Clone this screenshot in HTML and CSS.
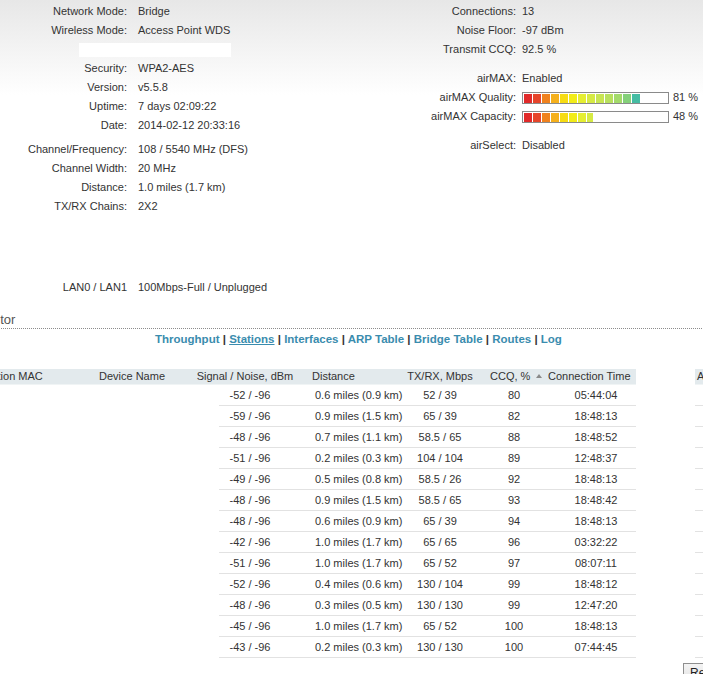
FILE: index.html
```html
<!DOCTYPE html>
<html>
<head>
<meta charset="utf-8">
<link rel="stylesheet" href="styles.css">
</head>
<body>
<div class="top">
  <div class="info info-left">
    <div class="lbl">Network Mode:</div><div class="val">Bridge</div>
    <div class="lbl">Wireless Mode:</div><div class="val">Access Point WDS</div>
    <div class="masked-row"><div class="mask"></div></div>
    <div class="lbl">Security:</div><div class="val">WPA2-AES</div>
    <div class="lbl">Version:</div><div class="val">v5.5.8</div>
    <div class="lbl">Uptime:</div><div class="val">7 days 02:09:22</div>
    <div class="lbl">Date:</div><div class="val">2014-02-12 20:33:16</div>
    <div class="spacer s4"></div>
    <div class="lbl">Channel/Frequency:</div><div class="val">108 / 5540 MHz (DFS)</div>
    <div class="lbl">Channel Width:</div><div class="val">20 MHz</div>
    <div class="lbl">Distance:</div><div class="val">1.0 miles (1.7 km)</div>
    <div class="lbl">TX/RX Chains:</div><div class="val">2X2</div>
  </div>
  <div class="info info-right">
    <div class="lbl">Connections:</div><div class="val">13</div>
    <div class="lbl">Noise Floor:</div><div class="val">-97 dBm</div>
    <div class="lbl">Transmit CCQ:</div><div class="val">92.5 %</div>
    <div class="spacer s10"></div>
    <div class="lbl">airMAX:</div><div class="val">Enabled</div>
    <div class="lbl">airMAX Quality:</div>
    <div class="val barval"><div class="bar"><div class="fill" style="width:81%"></div></div><span class="pct">81 %</span></div>
    <div class="lbl">airMAX Capacity:</div>
    <div class="val barval"><div class="bar"><div class="fill" style="width:48%"></div></div><span class="pct">48 %</span></div>
    <div class="spacer s10"></div>
    <div class="lbl">airSelect:</div><div class="val">Disabled</div>
  </div>
</div>

<div class="info lan">
  <div class="lbl">LAN0 / LAN1</div><div class="val">100Mbps-Full / Unplugged</div>
</div>

<div class="lower">
  <div class="heading">Monitor</div>
  <div class="tabs">
    <a class="tab">Throughput</a> <span class="sep">|</span>
    <a class="tab active">Stations</a> <span class="sep">|</span>
    <a class="tab">Interfaces</a> <span class="sep">|</span>
    <a class="tab">ARP Table</a> <span class="sep">|</span>
    <a class="tab">Bridge Table</a> <span class="sep">|</span>
    <a class="tab">Routes</a> <span class="sep">|</span>
    <a class="tab">Log</a>
  </div>

  <table class="stations">
    <colgroup>
      <col class="w-mac"><col class="w-name"><col class="w-sig"><col class="w-dist"><col class="w-txrx"><col class="w-ccq"><col class="w-time"><col class="w-gap"><col class="w-act">
    </colgroup>
    <thead>
      <tr>
        <th class="h-mac">Station MAC</th>
        <th class="h-name">Device Name</th>
        <th class="h-sig">Signal / Noise, dBm</th>
        <th class="h-dist">Distance</th>
        <th class="h-txrx">TX/RX, Mbps</th>
        <th class="h-ccq">CCQ, %<span class="sort"></span></th>
        <th class="h-time">Connection Time</th>
        <th class="h-gap"></th>
        <th class="h-act">Action</th>
      </tr>
    </thead>
    <tbody>
      <tr><td></td><td></td><td class="sig">-52 / -96</td><td class="dist">0.6 miles (0.9 km)</td><td class="txrx">52 / 39</td><td class="ccq">80</td><td class="time">05:44:04</td><td class="gap"></td><td class="act"></td></tr>
      <tr><td></td><td></td><td class="sig">-59 / -96</td><td class="dist">0.9 miles (1.5 km)</td><td class="txrx">65 / 39</td><td class="ccq">82</td><td class="time">18:48:13</td><td class="gap"></td><td class="act"></td></tr>
      <tr><td></td><td></td><td class="sig">-48 / -96</td><td class="dist">0.7 miles (1.1 km)</td><td class="txrx">58.5 / 65</td><td class="ccq">88</td><td class="time">18:48:52</td><td class="gap"></td><td class="act"></td></tr>
      <tr><td></td><td></td><td class="sig">-51 / -96</td><td class="dist">0.2 miles (0.3 km)</td><td class="txrx">104 / 104</td><td class="ccq">89</td><td class="time">12:48:37</td><td class="gap"></td><td class="act"></td></tr>
      <tr><td></td><td></td><td class="sig">-49 / -96</td><td class="dist">0.5 miles (0.8 km)</td><td class="txrx">58.5 / 26</td><td class="ccq">92</td><td class="time">18:48:13</td><td class="gap"></td><td class="act"></td></tr>
      <tr><td></td><td></td><td class="sig">-48 / -96</td><td class="dist">0.9 miles (1.5 km)</td><td class="txrx">58.5 / 65</td><td class="ccq">93</td><td class="time">18:48:42</td><td class="gap"></td><td class="act"></td></tr>
      <tr><td></td><td></td><td class="sig">-48 / -96</td><td class="dist">0.6 miles (0.9 km)</td><td class="txrx">65 / 39</td><td class="ccq">94</td><td class="time">18:48:13</td><td class="gap"></td><td class="act"></td></tr>
      <tr><td></td><td></td><td class="sig">-42 / -96</td><td class="dist">1.0 miles (1.7 km)</td><td class="txrx">65 / 65</td><td class="ccq">96</td><td class="time">03:32:22</td><td class="gap"></td><td class="act"></td></tr>
      <tr><td></td><td></td><td class="sig">-51 / -96</td><td class="dist">1.0 miles (1.7 km)</td><td class="txrx">65 / 52</td><td class="ccq">97</td><td class="time">08:07:11</td><td class="gap"></td><td class="act"></td></tr>
      <tr><td></td><td></td><td class="sig">-52 / -96</td><td class="dist">0.4 miles (0.6 km)</td><td class="txrx">130 / 104</td><td class="ccq">99</td><td class="time">18:48:12</td><td class="gap"></td><td class="act"></td></tr>
      <tr><td></td><td></td><td class="sig">-48 / -96</td><td class="dist">0.3 miles (0.5 km)</td><td class="txrx">130 / 130</td><td class="ccq">99</td><td class="time">12:47:20</td><td class="gap"></td><td class="act"></td></tr>
      <tr><td></td><td></td><td class="sig">-45 / -96</td><td class="dist">1.0 miles (1.7 km)</td><td class="txrx">65 / 52</td><td class="ccq">100</td><td class="time">18:48:13</td><td class="gap"></td><td class="act"></td></tr>
      <tr><td></td><td></td><td class="sig">-43 / -96</td><td class="dist">0.2 miles (0.3 km)</td><td class="txrx">130 / 130</td><td class="ccq">100</td><td class="time">07:44:45</td><td class="gap"></td><td class="act"></td></tr>
    </tbody>
  </table>

  <div class="actions">
    <button class="btn">Refresh</button>
  </div>
</div>
</body>
</html>
```

FILE: styles.css
```css
html, body {
  margin: 0;
  padding: 0;
  overflow: hidden;
}
body {
  width: 703px;
  height: 674px;
  font-family: "Liberation Sans", Arial, sans-serif;
  font-size: 11px;
  color: #333;
  background: #fff linear-gradient(#e7e7e7, #ffffff) no-repeat;
  background-size: 100% 95px;
}

.top {
  display: flex;
  padding-top: 2px;
}
.info {
  display: grid;
  line-height: 19px;
  align-content: start;
}
.info-left {
  width: 390px;
  grid-template-columns: 127px 1fr;
  column-gap: 11px;
}
.info-right {
  grid-template-columns: 126px 1fr;
  column-gap: 6px;
}
.lbl {
  text-align: right;
  white-space: nowrap;
}
.val {
  white-space: nowrap;
}
.spacer {
  grid-column: 1 / -1;
}
.s4 { height: 5px; }
.s10 { height: 10px; }

.masked-row {
  grid-column: 1 / -1;
  height: 19px;
  padding-left: 79px;
  box-sizing: border-box;
  padding-top: 3px;
}
.mask {
  width: 152px;
  height: 14px;
  background: #fff;
}

.barval {
  display: flex;
  align-items: center;
  gap: 4px;
}
.bar {
  width: 144px;
  height: 9px;
  border: 1px solid #8a8a8a;
  background: #fff;
  padding: 1px 0 0 1px;
  box-sizing: content-box;
}
.fill {
  height: 9px;
  max-width: 143px;
  background:
    repeating-linear-gradient(90deg, transparent 0 8px, #fff 8px 9px),
    linear-gradient(90deg,
      #e12a2a 0 9px, #e6452a 9px 18px, #f0821e 18px 27px, #f5b01c 27px 36px,
      #f7dc12 36px 45px, #f2ec18 45px 54px, #e5ee32 54px 63px, #d6ea44 63px 72px,
      #c8e552 72px 81px, #b8e05e 81px 90px, #a3da6a 90px 99px, #84d07a 99px 108px,
      #45bca3 108px 117px, #36b0b5 117px 126px, #2ea5c4 126px 135px, #2a9ad0 135px 144px);
  background-size: 144px 9px, 144px 9px;
  background-repeat: no-repeat;
}
.pct {
  line-height: 19px;
}

.lan {
  margin-top: 62px;
  grid-template-columns: 127px 1fr;
  column-gap: 11px;
}

.lower {
  margin-left: -30px;
  width: 800px;
}
.heading {
  margin-top: 15px;
  font-size: 13px;
  line-height: 16px;
  color: #555;
  padding-left: 2px;
  border-bottom: 1px dotted #8c8c8c;
}
.tabs {
  margin-top: 2px;
  line-height: 16px;
  font-weight: bold;
  font-size: 11.5px;
  padding-left: 185px;
  white-space: nowrap;
}
.tab {
  color: #3a8cae;
  text-decoration: none;
}
.tab.active {
  text-decoration: underline;
}
.sep {
  color: #333;
}

.stations {
  margin-top: 22px;
  border-collapse: separate;
  border-spacing: 0;
  table-layout: fixed;
  width: 800px;
}
.w-mac { width: 120px; }
.w-name { width: 100px; }
.w-sig { width: 110px; }
.w-dist { width: 100px; }
.w-txrx { width: 80px; }
.w-ccq { width: 68px; }
.w-time { width: 88px; }
.w-gap { width: 59px; }
.w-act { width: 75px; }

.stations th {
  font-weight: normal;
  height: 15px;
  line-height: 15px;
  padding: 0;
  background: #e3eaed;
  border-bottom: 1px solid #f0f4f5;
  text-align: left;
  white-space: nowrap;
  overflow: hidden;
}
.stations th.h-gap {
  background: transparent;
  border-bottom-color: transparent;
}
.stations th.h-mac { padding-left: 11px; }
.stations th.h-name { padding-left: 9px; }
.stations th.h-sig { text-align: center; }
.stations th.h-dist { padding-left: 12px; }
.stations th.h-txrx { text-align: center; }
.stations th.h-ccq { padding-left: 10px; }
.stations th.h-time { padding-left: 0; }
.stations th.h-act { padding-left: 2px; }
.sort {
  display: inline-block;
  width: 0;
  height: 0;
  margin-left: 6px;
  vertical-align: 2px;
  border-left: 3px solid transparent;
  border-right: 3px solid transparent;
  border-bottom: 4px solid #8a8a8a;
}

.stations td {
  height: 20px;
  line-height: 20px;
  padding: 0;
  white-space: nowrap;
  border-bottom: 1px solid transparent;
}
.stations td.dist,
.stations td.txrx,
.stations td.ccq,
.stations td.time,
.stations td.act {
  border-bottom-color: #e2e2e2;
}
.stations td.sig {
  text-align: center;
  padding-left: 10px;
  background: linear-gradient(#e2e2e2, #e2e2e2) no-repeat;
  background-position: 29px 100%;
  background-size: calc(100% - 29px) 1px;
  background-origin: border-box;
  background-clip: border-box;
}
.stations td.dist { padding-left: 15px; }
.stations td.txrx { text-align: center; }
.stations td.ccq { text-align: center; }
.stations td.time { text-align: center; padding-left: 8px; }

.actions {
  margin-top: 5px;
  padding-left: 713px;
}
.btn {
  font-family: "Liberation Sans", Arial, sans-serif;
  font-size: 12px;
  color: #222;
  background: linear-gradient(#f4f4f4, #e2e2e2);
  border: 1px solid #8f8f8f;
  padding: 2px 6px;
  margin: 0;
}
```
